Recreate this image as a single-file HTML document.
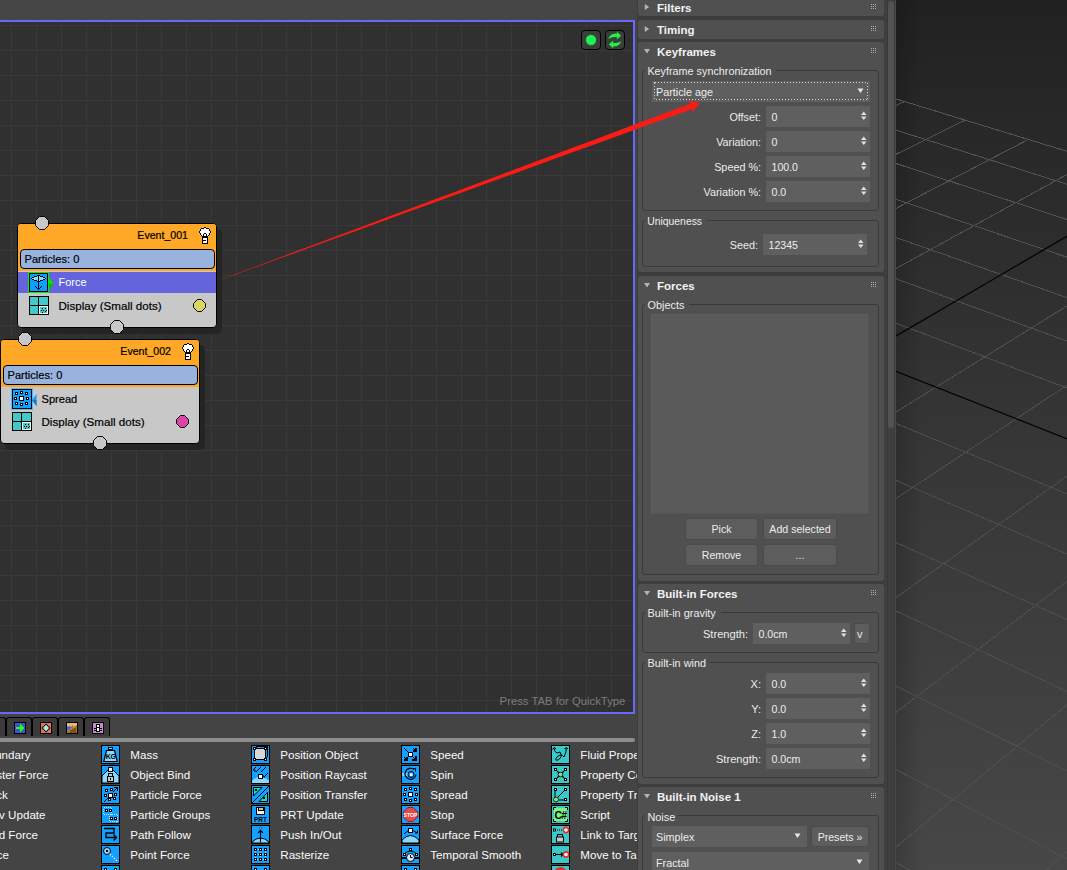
<!DOCTYPE html><html><head><meta charset="utf-8"><style>
html,body{margin:0;padding:0}
body{width:1067px;height:870px;overflow:hidden;position:relative;background:#3c3c3c;font-family:"Liberation Sans",sans-serif}
.b{position:absolute;box-sizing:border-box}
.t{position:absolute;white-space:nowrap}
svg.b{display:block}
</style></head><body>
<div class="b" style="left:0px;top:0px;width:636px;height:20px;background:#464646"></div>
<div class="b" style="left:0px;top:20px;width:635px;height:694px;background:#6868fc"></div>
<div class="b" style="left:0px;top:22px;width:633px;height:690px;background:#303030"></div>
<svg class="b" style="left:0px;top:22px;" width="633" height="690" viewBox="0 0 633 690"><rect x="11" y="0" width="1" height="690" fill="#393939"/><rect x="36" y="0" width="1" height="690" fill="#393939"/><rect x="61" y="0" width="1" height="690" fill="#393939"/><rect x="86" y="0" width="1" height="690" fill="#393939"/><rect x="111" y="0" width="1" height="690" fill="#393939"/><rect x="136" y="0" width="1" height="690" fill="#393939"/><rect x="161" y="0" width="1" height="690" fill="#393939"/><rect x="186" y="0" width="1" height="690" fill="#393939"/><rect x="211" y="0" width="1" height="690" fill="#393939"/><rect x="236" y="0" width="1" height="690" fill="#393939"/><rect x="261" y="0" width="1" height="690" fill="#393939"/><rect x="286" y="0" width="1" height="690" fill="#393939"/><rect x="311" y="0" width="1" height="690" fill="#393939"/><rect x="336" y="0" width="1" height="690" fill="#393939"/><rect x="361" y="0" width="1" height="690" fill="#393939"/><rect x="386" y="0" width="1" height="690" fill="#393939"/><rect x="411" y="0" width="1" height="690" fill="#393939"/><rect x="436" y="0" width="1" height="690" fill="#393939"/><rect x="461" y="0" width="1" height="690" fill="#393939"/><rect x="486" y="0" width="1" height="690" fill="#393939"/><rect x="511" y="0" width="1" height="690" fill="#393939"/><rect x="536" y="0" width="1" height="690" fill="#393939"/><rect x="561" y="0" width="1" height="690" fill="#393939"/><rect x="586" y="0" width="1" height="690" fill="#393939"/><rect x="611" y="0" width="1" height="690" fill="#393939"/><rect x="0" y="3" width="633" height="1" fill="#393939"/><rect x="0" y="28" width="633" height="1" fill="#393939"/><rect x="0" y="53" width="633" height="1" fill="#393939"/><rect x="0" y="78" width="633" height="1" fill="#393939"/><rect x="0" y="103" width="633" height="1" fill="#393939"/><rect x="0" y="128" width="633" height="1" fill="#393939"/><rect x="0" y="153" width="633" height="1" fill="#393939"/><rect x="0" y="178" width="633" height="1" fill="#393939"/><rect x="0" y="203" width="633" height="1" fill="#393939"/><rect x="0" y="228" width="633" height="1" fill="#393939"/><rect x="0" y="253" width="633" height="1" fill="#393939"/><rect x="0" y="278" width="633" height="1" fill="#393939"/><rect x="0" y="303" width="633" height="1" fill="#393939"/><rect x="0" y="328" width="633" height="1" fill="#393939"/><rect x="0" y="353" width="633" height="1" fill="#393939"/><rect x="0" y="378" width="633" height="1" fill="#393939"/><rect x="0" y="403" width="633" height="1" fill="#393939"/><rect x="0" y="428" width="633" height="1" fill="#393939"/><rect x="0" y="453" width="633" height="1" fill="#393939"/><rect x="0" y="478" width="633" height="1" fill="#393939"/><rect x="0" y="503" width="633" height="1" fill="#393939"/><rect x="0" y="528" width="633" height="1" fill="#393939"/><rect x="0" y="553" width="633" height="1" fill="#393939"/><rect x="0" y="578" width="633" height="1" fill="#393939"/><rect x="0" y="603" width="633" height="1" fill="#393939"/><rect x="0" y="628" width="633" height="1" fill="#393939"/><rect x="0" y="653" width="633" height="1" fill="#393939"/><rect x="0" y="678" width="633" height="1" fill="#393939"/></svg>
<div class="b" style="left:581px;top:30px;width:20px;height:20px;background:#3c3c3c;border:1px solid #000;border-radius:4px"></div>
<svg class="b" style="left:581px;top:30px;" width="20" height="20" viewBox="0 0 20 20"><circle cx="10" cy="10" r="5.5" fill="#22ee55" stroke="#0a4a1a" stroke-width="0.6"/></svg>
<div class="b" style="left:605px;top:30px;width:20px;height:20px;background:#3c3c3c;border:1px solid #000;border-radius:4px"></div>
<svg class="b" style="left:605px;top:30px;" width="20" height="20" viewBox="0 0 20 20"><path d="M3.2 9 Q5.5 3.2 12 3.6 L11.8 1.5 L16.2 5.8 L11.8 9.6 L12 7.2 Q7.5 6.6 3.2 9Z" fill="#22ee44"/><path d="M16.3 11.2 Q14 16.8 8 16.4 L8.2 18.5 L3.8 14.2 L8.2 10.4 L8 12.8 Q12.5 13.4 16.3 11.2Z" fill="#22ee44"/></svg>
<div class="t" style="left:499.60px;top:695.73px;font-size:11.3px;line-height:11.3px;color:#7c7c7c;font-weight:normal;">Press TAB for QuickType</div>
<div class="b" style="left:22px;top:229px;width:200px;height:105px;background:#242424;border-radius:5px"></div>
<div class="b" style="left:17px;top:223px;width:200px;height:105px;background:#c8c8c8;border:1px solid #000;border-radius:4px;overflow:hidden"></div>
<div class="b" style="left:18px;top:224px;width:198px;height:47px;background:#ffa828;border-radius:3px 3px 0 0"></div>
<div class="b" style="left:20px;top:249px;width:195px;height:20px;background:#98b4de;border:1px solid #000;border-radius:4px"></div>
<div class="t" style="left:24.50px;top:253.60px;font-size:11.1px;line-height:11.1px;color:#000;font-weight:normal;-webkit-text-stroke:0.2px #000">Particles: 0</div>
<div class="t" style="right:879.00px;top:230.03px;font-size:10.6px;line-height:10.6px;color:#000;font-weight:normal;text-align:right;-webkit-text-stroke:0.2px #000">Event_001</div>
<svg class="b" style="left:199px;top:227px;shape-rendering:crispEdges" width="12" height="17" viewBox="0 0 12 17"><rect x="5" y="0" width="1" height="1" fill="#000"/><rect x="6" y="0" width="1" height="1" fill="#000"/><rect x="2" y="1" width="1" height="1" fill="#000"/><rect x="3" y="1" width="1" height="1" fill="#000"/><rect x="4" y="1" width="1" height="1" fill="#000"/><rect x="5" y="1" width="1" height="1" fill="#fff"/><rect x="6" y="1" width="1" height="1" fill="#fff"/><rect x="7" y="1" width="1" height="1" fill="#000"/><rect x="8" y="1" width="1" height="1" fill="#000"/><rect x="9" y="1" width="1" height="1" fill="#000"/><rect x="1" y="2" width="1" height="1" fill="#000"/><rect x="2" y="2" width="1" height="1" fill="#fff"/><rect x="3" y="2" width="1" height="1" fill="#fff"/><rect x="4" y="2" width="1" height="1" fill="#fff"/><rect x="5" y="2" width="1" height="1" fill="#fff"/><rect x="6" y="2" width="1" height="1" fill="#fff"/><rect x="7" y="2" width="1" height="1" fill="#fff"/><rect x="8" y="2" width="1" height="1" fill="#fff"/><rect x="9" y="2" width="1" height="1" fill="#fff"/><rect x="10" y="2" width="1" height="1" fill="#000"/><rect x="1" y="3" width="1" height="1" fill="#000"/><rect x="2" y="3" width="1" height="1" fill="#fff"/><rect x="3" y="3" width="1" height="1" fill="#fff"/><rect x="4" y="3" width="1" height="1" fill="#fff"/><rect x="5" y="3" width="1" height="1" fill="#fff"/><rect x="6" y="3" width="1" height="1" fill="#fff"/><rect x="7" y="3" width="1" height="1" fill="#fff"/><rect x="8" y="3" width="1" height="1" fill="#fff"/><rect x="9" y="3" width="1" height="1" fill="#fff"/><rect x="10" y="3" width="1" height="1" fill="#000"/><rect x="0" y="4" width="1" height="1" fill="#000"/><rect x="1" y="4" width="1" height="1" fill="#fff"/><rect x="2" y="4" width="1" height="1" fill="#fff"/><rect x="3" y="4" width="1" height="1" fill="#fff"/><rect x="4" y="4" width="1" height="1" fill="#fff"/><rect x="5" y="4" width="1" height="1" fill="#fff"/><rect x="6" y="4" width="1" height="1" fill="#fff"/><rect x="7" y="4" width="1" height="1" fill="#fff"/><rect x="8" y="4" width="1" height="1" fill="#fff"/><rect x="9" y="4" width="1" height="1" fill="#fff"/><rect x="10" y="4" width="1" height="1" fill="#fff"/><rect x="11" y="4" width="1" height="1" fill="#000"/><rect x="0" y="5" width="1" height="1" fill="#000"/><rect x="1" y="5" width="1" height="1" fill="#fff"/><rect x="2" y="5" width="1" height="1" fill="#fff"/><rect x="3" y="5" width="1" height="1" fill="#fff"/><rect x="4" y="5" width="1" height="1" fill="#fff"/><rect x="5" y="5" width="1" height="1" fill="#fff"/><rect x="6" y="5" width="1" height="1" fill="#fff"/><rect x="7" y="5" width="1" height="1" fill="#fff"/><rect x="8" y="5" width="1" height="1" fill="#fff"/><rect x="9" y="5" width="1" height="1" fill="#fff"/><rect x="10" y="5" width="1" height="1" fill="#fff"/><rect x="11" y="5" width="1" height="1" fill="#000"/><rect x="1" y="6" width="1" height="1" fill="#000"/><rect x="2" y="6" width="1" height="1" fill="#fff"/><rect x="3" y="6" width="1" height="1" fill="#fff"/><rect x="4" y="6" width="1" height="1" fill="#fff"/><rect x="5" y="6" width="1" height="1" fill="#000"/><rect x="6" y="6" width="1" height="1" fill="#000"/><rect x="7" y="6" width="1" height="1" fill="#fff"/><rect x="8" y="6" width="1" height="1" fill="#fff"/><rect x="9" y="6" width="1" height="1" fill="#fff"/><rect x="10" y="6" width="1" height="1" fill="#000"/><rect x="1" y="7" width="1" height="1" fill="#000"/><rect x="2" y="7" width="1" height="1" fill="#fff"/><rect x="3" y="7" width="1" height="1" fill="#fff"/><rect x="4" y="7" width="1" height="1" fill="#000"/><rect x="5" y="7" width="1" height="1" fill="#fff"/><rect x="6" y="7" width="1" height="1" fill="#fff"/><rect x="7" y="7" width="1" height="1" fill="#000"/><rect x="8" y="7" width="1" height="1" fill="#fff"/><rect x="9" y="7" width="1" height="1" fill="#fff"/><rect x="10" y="7" width="1" height="1" fill="#000"/><rect x="2" y="8" width="1" height="1" fill="#000"/><rect x="3" y="8" width="1" height="1" fill="#fff"/><rect x="4" y="8" width="1" height="1" fill="#000"/><rect x="5" y="8" width="1" height="1" fill="#fff"/><rect x="6" y="8" width="1" height="1" fill="#fff"/><rect x="7" y="8" width="1" height="1" fill="#000"/><rect x="8" y="8" width="1" height="1" fill="#fff"/><rect x="9" y="8" width="1" height="1" fill="#000"/><rect x="3" y="9" width="1" height="1" fill="#000"/><rect x="4" y="9" width="1" height="1" fill="#000"/><rect x="5" y="9" width="1" height="1" fill="#000"/><rect x="6" y="9" width="1" height="1" fill="#000"/><rect x="7" y="9" width="1" height="1" fill="#000"/><rect x="8" y="9" width="1" height="1" fill="#000"/><rect x="3" y="10" width="1" height="1" fill="#000"/><rect x="4" y="10" width="1" height="1" fill="#000"/><rect x="5" y="10" width="1" height="1" fill="#000"/><rect x="6" y="10" width="1" height="1" fill="#000"/><rect x="7" y="10" width="1" height="1" fill="#000"/><rect x="8" y="10" width="1" height="1" fill="#000"/><rect x="3" y="11" width="1" height="1" fill="#000"/><rect x="4" y="11" width="1" height="1" fill="#fff"/><rect x="5" y="11" width="1" height="1" fill="#fff"/><rect x="6" y="11" width="1" height="1" fill="#fff"/><rect x="7" y="11" width="1" height="1" fill="#fff"/><rect x="8" y="11" width="1" height="1" fill="#000"/><rect x="3" y="12" width="1" height="1" fill="#000"/><rect x="4" y="12" width="1" height="1" fill="#fff"/><rect x="5" y="12" width="1" height="1" fill="#fff"/><rect x="6" y="12" width="1" height="1" fill="#fff"/><rect x="7" y="12" width="1" height="1" fill="#fff"/><rect x="8" y="12" width="1" height="1" fill="#000"/><rect x="3" y="13" width="1" height="1" fill="#000"/><rect x="4" y="13" width="1" height="1" fill="#000"/><rect x="5" y="13" width="1" height="1" fill="#000"/><rect x="6" y="13" width="1" height="1" fill="#000"/><rect x="7" y="13" width="1" height="1" fill="#fff"/><rect x="8" y="13" width="1" height="1" fill="#000"/><rect x="3" y="14" width="1" height="1" fill="#000"/><rect x="4" y="14" width="1" height="1" fill="#fff"/><rect x="5" y="14" width="1" height="1" fill="#fff"/><rect x="6" y="14" width="1" height="1" fill="#fff"/><rect x="7" y="14" width="1" height="1" fill="#fff"/><rect x="8" y="14" width="1" height="1" fill="#000"/><rect x="3" y="15" width="1" height="1" fill="#000"/><rect x="4" y="15" width="1" height="1" fill="#fff"/><rect x="5" y="15" width="1" height="1" fill="#fff"/><rect x="6" y="15" width="1" height="1" fill="#fff"/><rect x="7" y="15" width="1" height="1" fill="#fff"/><rect x="8" y="15" width="1" height="1" fill="#000"/><rect x="3" y="16" width="1" height="1" fill="#000"/><rect x="4" y="16" width="1" height="1" fill="#000"/><rect x="5" y="16" width="1" height="1" fill="#000"/><rect x="6" y="16" width="1" height="1" fill="#000"/><rect x="7" y="16" width="1" height="1" fill="#000"/><rect x="8" y="16" width="1" height="1" fill="#000"/></svg>
<div class="b" style="left:18px;top:272px;width:198px;height:21px;background:#6464dd"></div>
<svg class="b" style="left:28px;top:272px;shape-rendering:crispEdges" width="21" height="21" viewBox="0 0 21 21"><rect x="0" y="0" width="21" height="21" fill="#00ee00"/><rect x="1" y="1" width="19" height="19" fill="#000"/><rect x="2" y="2" width="17" height="17" fill="#0aa0ff"/><rect x="9" y="3" width="3" height="1" fill="#000"/><rect x="6" y="4" width="3" height="1" fill="#000"/><rect x="9" y="4" width="3" height="1" fill="#8adcff"/><rect x="12" y="4" width="3" height="1" fill="#000"/><rect x="4" y="5" width="2" height="1" fill="#000"/><rect x="6" y="5" width="9" height="1" fill="#8adcff"/><rect x="15" y="5" width="2" height="1" fill="#000"/><rect x="3" y="6" width="1" height="1" fill="#000"/><rect x="4" y="6" width="13" height="1" fill="#8adcff"/><rect x="17" y="6" width="1" height="1" fill="#000"/><rect x="4" y="7" width="2" height="1" fill="#000"/><rect x="6" y="7" width="9" height="1" fill="#8adcff"/><rect x="15" y="7" width="2" height="1" fill="#000"/><rect x="6" y="8" width="3" height="1" fill="#000"/><rect x="9" y="8" width="3" height="1" fill="#8adcff"/><rect x="12" y="8" width="3" height="1" fill="#000"/><rect x="9" y="9" width="3" height="1" fill="#000"/><rect x="10" y="4" width="1" height="14" fill="#000"/><rect x="7" y="14" width="1" height="1" fill="#000"/><rect x="13" y="14" width="1" height="1" fill="#000"/><rect x="8" y="15" width="1" height="1" fill="#000"/><rect x="12" y="15" width="1" height="1" fill="#000"/><rect x="9" y="16" width="1" height="1" fill="#000"/><rect x="11" y="16" width="1" height="1" fill="#000"/><rect x="10" y="17" width="1" height="1" fill="#000"/></svg>
<svg class="b" style="left:49px;top:278px;" width="5" height="11" viewBox="0 0 5 11"><path d="M0 0 L4.5 5.5 L0 11Z" fill="#00ee00"/><path d="M0 5.5 L4.5 5.5 L0 11Z" fill="#00bb00"/></svg>
<div class="t" style="left:58.60px;top:277.47px;font-size:10.9px;line-height:10.9px;color:#fff;font-weight:normal;">Force</div>
<svg class="b" style="left:29px;top:296px;shape-rendering:crispEdges" width="20" height="19" viewBox="0 0 20 19"><rect x="0" y="0" width="20" height="19" fill="#000"/><rect x="1" y="1" width="8" height="8" fill="#44c8c8"/><rect x="10" y="1" width="9" height="8" fill="#44c8c8"/><rect x="1" y="10" width="8" height="8" fill="#44c8c8"/><rect x="10" y="10" width="9" height="8" fill="#fff"/><rect x="11" y="11" width="7" height="6" fill="#44c8c8"/><rect x="13" y="12" width="1" height="1" fill="#000"/><rect x="16" y="12" width="1" height="1" fill="#000"/><rect x="12" y="14" width="1" height="1" fill="#000"/><rect x="14" y="14" width="1" height="1" fill="#000"/><rect x="17" y="14" width="1" height="1" fill="#000"/><rect x="13" y="16" width="1" height="1" fill="#000"/><rect x="16" y="15" width="1" height="1" fill="#000"/></svg>
<div class="t" style="left:58.50px;top:299.68px;font-size:11.6px;line-height:11.6px;color:#000;font-weight:normal;-webkit-text-stroke:0.2px #000">Display (Small dots)</div>
<svg class="b" style="left:193px;top:299px;" width="14" height="14" viewBox="0 0 14 14"><polygon points="4.5,0.5 8.5,0.5 12.5,4.5 12.5,8.5 8.5,12.5 4.5,12.5 0.5,8.5 0.5,4.5" fill="#d8d860" stroke="#000" stroke-width="1"/></svg>
<svg class="b" style="left:35px;top:216px;" width="15" height="15" viewBox="0 0 15 15"><polygon points="4.5,0.5 9.5,0.5 13.5,4.5 13.5,9.5 9.5,13.5 4.5,13.5 0.5,9.5 0.5,4.5" fill="#c8c8c8" stroke="#000" stroke-width="1"/></svg>
<svg class="b" style="left:110px;top:320px;" width="15" height="15" viewBox="0 0 15 15"><polygon points="4.5,0.5 9.5,0.5 13.5,4.5 13.5,9.5 9.5,13.5 4.5,13.5 0.5,9.5 0.5,4.5" fill="#c8c8c8" stroke="#000" stroke-width="1"/></svg>
<div class="b" style="left:5px;top:345px;width:200px;height:105px;background:#242424;border-radius:5px"></div>
<div class="b" style="left:0px;top:339px;width:200px;height:105px;background:#c8c8c8;border:1px solid #000;border-radius:4px;overflow:hidden"></div>
<div class="b" style="left:1px;top:340px;width:198px;height:47px;background:#ffa828;border-radius:3px 3px 0 0"></div>
<div class="b" style="left:3px;top:365px;width:195px;height:20px;background:#98b4de;border:1px solid #000;border-radius:4px"></div>
<div class="t" style="left:7.50px;top:369.60px;font-size:11.1px;line-height:11.1px;color:#000;font-weight:normal;-webkit-text-stroke:0.2px #000">Particles: 0</div>
<div class="t" style="right:896.00px;top:346.03px;font-size:10.6px;line-height:10.6px;color:#000;font-weight:normal;text-align:right;-webkit-text-stroke:0.2px #000">Event_002</div>
<svg class="b" style="left:182px;top:343px;shape-rendering:crispEdges" width="12" height="17" viewBox="0 0 12 17"><rect x="5" y="0" width="1" height="1" fill="#000"/><rect x="6" y="0" width="1" height="1" fill="#000"/><rect x="2" y="1" width="1" height="1" fill="#000"/><rect x="3" y="1" width="1" height="1" fill="#000"/><rect x="4" y="1" width="1" height="1" fill="#000"/><rect x="5" y="1" width="1" height="1" fill="#fff"/><rect x="6" y="1" width="1" height="1" fill="#fff"/><rect x="7" y="1" width="1" height="1" fill="#000"/><rect x="8" y="1" width="1" height="1" fill="#000"/><rect x="9" y="1" width="1" height="1" fill="#000"/><rect x="1" y="2" width="1" height="1" fill="#000"/><rect x="2" y="2" width="1" height="1" fill="#fff"/><rect x="3" y="2" width="1" height="1" fill="#fff"/><rect x="4" y="2" width="1" height="1" fill="#fff"/><rect x="5" y="2" width="1" height="1" fill="#fff"/><rect x="6" y="2" width="1" height="1" fill="#fff"/><rect x="7" y="2" width="1" height="1" fill="#fff"/><rect x="8" y="2" width="1" height="1" fill="#fff"/><rect x="9" y="2" width="1" height="1" fill="#fff"/><rect x="10" y="2" width="1" height="1" fill="#000"/><rect x="1" y="3" width="1" height="1" fill="#000"/><rect x="2" y="3" width="1" height="1" fill="#fff"/><rect x="3" y="3" width="1" height="1" fill="#fff"/><rect x="4" y="3" width="1" height="1" fill="#fff"/><rect x="5" y="3" width="1" height="1" fill="#fff"/><rect x="6" y="3" width="1" height="1" fill="#fff"/><rect x="7" y="3" width="1" height="1" fill="#fff"/><rect x="8" y="3" width="1" height="1" fill="#fff"/><rect x="9" y="3" width="1" height="1" fill="#fff"/><rect x="10" y="3" width="1" height="1" fill="#000"/><rect x="0" y="4" width="1" height="1" fill="#000"/><rect x="1" y="4" width="1" height="1" fill="#fff"/><rect x="2" y="4" width="1" height="1" fill="#fff"/><rect x="3" y="4" width="1" height="1" fill="#fff"/><rect x="4" y="4" width="1" height="1" fill="#fff"/><rect x="5" y="4" width="1" height="1" fill="#fff"/><rect x="6" y="4" width="1" height="1" fill="#fff"/><rect x="7" y="4" width="1" height="1" fill="#fff"/><rect x="8" y="4" width="1" height="1" fill="#fff"/><rect x="9" y="4" width="1" height="1" fill="#fff"/><rect x="10" y="4" width="1" height="1" fill="#fff"/><rect x="11" y="4" width="1" height="1" fill="#000"/><rect x="0" y="5" width="1" height="1" fill="#000"/><rect x="1" y="5" width="1" height="1" fill="#fff"/><rect x="2" y="5" width="1" height="1" fill="#fff"/><rect x="3" y="5" width="1" height="1" fill="#fff"/><rect x="4" y="5" width="1" height="1" fill="#fff"/><rect x="5" y="5" width="1" height="1" fill="#fff"/><rect x="6" y="5" width="1" height="1" fill="#fff"/><rect x="7" y="5" width="1" height="1" fill="#fff"/><rect x="8" y="5" width="1" height="1" fill="#fff"/><rect x="9" y="5" width="1" height="1" fill="#fff"/><rect x="10" y="5" width="1" height="1" fill="#fff"/><rect x="11" y="5" width="1" height="1" fill="#000"/><rect x="1" y="6" width="1" height="1" fill="#000"/><rect x="2" y="6" width="1" height="1" fill="#fff"/><rect x="3" y="6" width="1" height="1" fill="#fff"/><rect x="4" y="6" width="1" height="1" fill="#fff"/><rect x="5" y="6" width="1" height="1" fill="#000"/><rect x="6" y="6" width="1" height="1" fill="#000"/><rect x="7" y="6" width="1" height="1" fill="#fff"/><rect x="8" y="6" width="1" height="1" fill="#fff"/><rect x="9" y="6" width="1" height="1" fill="#fff"/><rect x="10" y="6" width="1" height="1" fill="#000"/><rect x="1" y="7" width="1" height="1" fill="#000"/><rect x="2" y="7" width="1" height="1" fill="#fff"/><rect x="3" y="7" width="1" height="1" fill="#fff"/><rect x="4" y="7" width="1" height="1" fill="#000"/><rect x="5" y="7" width="1" height="1" fill="#fff"/><rect x="6" y="7" width="1" height="1" fill="#fff"/><rect x="7" y="7" width="1" height="1" fill="#000"/><rect x="8" y="7" width="1" height="1" fill="#fff"/><rect x="9" y="7" width="1" height="1" fill="#fff"/><rect x="10" y="7" width="1" height="1" fill="#000"/><rect x="2" y="8" width="1" height="1" fill="#000"/><rect x="3" y="8" width="1" height="1" fill="#fff"/><rect x="4" y="8" width="1" height="1" fill="#000"/><rect x="5" y="8" width="1" height="1" fill="#fff"/><rect x="6" y="8" width="1" height="1" fill="#fff"/><rect x="7" y="8" width="1" height="1" fill="#000"/><rect x="8" y="8" width="1" height="1" fill="#fff"/><rect x="9" y="8" width="1" height="1" fill="#000"/><rect x="3" y="9" width="1" height="1" fill="#000"/><rect x="4" y="9" width="1" height="1" fill="#000"/><rect x="5" y="9" width="1" height="1" fill="#000"/><rect x="6" y="9" width="1" height="1" fill="#000"/><rect x="7" y="9" width="1" height="1" fill="#000"/><rect x="8" y="9" width="1" height="1" fill="#000"/><rect x="3" y="10" width="1" height="1" fill="#000"/><rect x="4" y="10" width="1" height="1" fill="#000"/><rect x="5" y="10" width="1" height="1" fill="#000"/><rect x="6" y="10" width="1" height="1" fill="#000"/><rect x="7" y="10" width="1" height="1" fill="#000"/><rect x="8" y="10" width="1" height="1" fill="#000"/><rect x="3" y="11" width="1" height="1" fill="#000"/><rect x="4" y="11" width="1" height="1" fill="#fff"/><rect x="5" y="11" width="1" height="1" fill="#fff"/><rect x="6" y="11" width="1" height="1" fill="#fff"/><rect x="7" y="11" width="1" height="1" fill="#fff"/><rect x="8" y="11" width="1" height="1" fill="#000"/><rect x="3" y="12" width="1" height="1" fill="#000"/><rect x="4" y="12" width="1" height="1" fill="#fff"/><rect x="5" y="12" width="1" height="1" fill="#fff"/><rect x="6" y="12" width="1" height="1" fill="#fff"/><rect x="7" y="12" width="1" height="1" fill="#fff"/><rect x="8" y="12" width="1" height="1" fill="#000"/><rect x="3" y="13" width="1" height="1" fill="#000"/><rect x="4" y="13" width="1" height="1" fill="#000"/><rect x="5" y="13" width="1" height="1" fill="#000"/><rect x="6" y="13" width="1" height="1" fill="#000"/><rect x="7" y="13" width="1" height="1" fill="#fff"/><rect x="8" y="13" width="1" height="1" fill="#000"/><rect x="3" y="14" width="1" height="1" fill="#000"/><rect x="4" y="14" width="1" height="1" fill="#fff"/><rect x="5" y="14" width="1" height="1" fill="#fff"/><rect x="6" y="14" width="1" height="1" fill="#fff"/><rect x="7" y="14" width="1" height="1" fill="#fff"/><rect x="8" y="14" width="1" height="1" fill="#000"/><rect x="3" y="15" width="1" height="1" fill="#000"/><rect x="4" y="15" width="1" height="1" fill="#fff"/><rect x="5" y="15" width="1" height="1" fill="#fff"/><rect x="6" y="15" width="1" height="1" fill="#fff"/><rect x="7" y="15" width="1" height="1" fill="#fff"/><rect x="8" y="15" width="1" height="1" fill="#000"/><rect x="3" y="16" width="1" height="1" fill="#000"/><rect x="4" y="16" width="1" height="1" fill="#000"/><rect x="5" y="16" width="1" height="1" fill="#000"/><rect x="6" y="16" width="1" height="1" fill="#000"/><rect x="7" y="16" width="1" height="1" fill="#000"/><rect x="8" y="16" width="1" height="1" fill="#000"/></svg>
<svg class="b" style="left:11px;top:388px;shape-rendering:crispEdges" width="22" height="22" viewBox="0 0 22 22"><rect x="0" y="0" width="22" height="22" fill="#55b8ff"/><rect x="1" y="1" width="20" height="20" fill="#000"/><rect x="2" y="2" width="18" height="18" fill="#14a0ff"/><rect x="4.0" y="4.0" width="3" height="3" fill="#000"/><rect x="5.0" y="5.0" width="1" height="1" fill="#fff"/><rect x="9.0" y="3.0" width="3" height="3" fill="#000"/><rect x="10.0" y="4.0" width="1" height="1" fill="#fff"/><rect x="14.0" y="4.0" width="3" height="3" fill="#000"/><rect x="15.0" y="5.0" width="1" height="1" fill="#fff"/><rect x="3.0" y="9.0" width="3" height="3" fill="#000"/><rect x="4.0" y="10.0" width="1" height="1" fill="#fff"/><rect x="15.0" y="9.0" width="3" height="3" fill="#000"/><rect x="16.0" y="10.0" width="1" height="1" fill="#fff"/><rect x="4.0" y="14.0" width="3" height="3" fill="#000"/><rect x="5.0" y="15.0" width="1" height="1" fill="#fff"/><rect x="9.0" y="15.0" width="3" height="3" fill="#000"/><rect x="10.0" y="16.0" width="1" height="1" fill="#fff"/><rect x="14.0" y="14.0" width="3" height="3" fill="#000"/><rect x="15.0" y="15.0" width="1" height="1" fill="#fff"/><rect x="8" y="8" width="5" height="5" fill="#000"/><rect x="9" y="9" width="3" height="3" fill="#fff"/></svg>
<svg class="b" style="left:32px;top:394px;" width="5" height="12" viewBox="0 0 5 12"><path d="M4.5 0 L0 6 L4.5 12Z" fill="#2299ee"/><path d="M4.5 6 L0 6 L4.5 12Z" fill="#1a77bb"/></svg>
<div class="t" style="left:41.50px;top:394.10px;font-size:11.1px;line-height:11.1px;color:#000;font-weight:normal;-webkit-text-stroke:0.2px #000">Spread</div>
<svg class="b" style="left:12px;top:412px;shape-rendering:crispEdges" width="20" height="19" viewBox="0 0 20 19"><rect x="0" y="0" width="20" height="19" fill="#000"/><rect x="1" y="1" width="8" height="8" fill="#44c8c8"/><rect x="10" y="1" width="9" height="8" fill="#44c8c8"/><rect x="1" y="10" width="8" height="8" fill="#44c8c8"/><rect x="10" y="10" width="9" height="8" fill="#fff"/><rect x="11" y="11" width="7" height="6" fill="#44c8c8"/><rect x="13" y="12" width="1" height="1" fill="#000"/><rect x="16" y="12" width="1" height="1" fill="#000"/><rect x="12" y="14" width="1" height="1" fill="#000"/><rect x="14" y="14" width="1" height="1" fill="#000"/><rect x="17" y="14" width="1" height="1" fill="#000"/><rect x="13" y="16" width="1" height="1" fill="#000"/><rect x="16" y="15" width="1" height="1" fill="#000"/></svg>
<div class="t" style="left:41.50px;top:415.68px;font-size:11.6px;line-height:11.6px;color:#000;font-weight:normal;-webkit-text-stroke:0.2px #000">Display (Small dots)</div>
<svg class="b" style="left:176px;top:415px;" width="14" height="14" viewBox="0 0 14 14"><polygon points="4.5,0.5 8.5,0.5 12.5,4.5 12.5,8.5 8.5,12.5 4.5,12.5 0.5,8.5 0.5,4.5" fill="#dd44aa" stroke="#000" stroke-width="1"/></svg>
<svg class="b" style="left:18px;top:332px;" width="15" height="15" viewBox="0 0 15 15"><polygon points="4.5,0.5 9.5,0.5 13.5,4.5 13.5,9.5 9.5,13.5 4.5,13.5 0.5,9.5 0.5,4.5" fill="#c8c8c8" stroke="#000" stroke-width="1"/></svg>
<svg class="b" style="left:93px;top:436px;" width="15" height="15" viewBox="0 0 15 15"><polygon points="4.5,0.5 9.5,0.5 13.5,4.5 13.5,9.5 9.5,13.5 4.5,13.5 0.5,9.5 0.5,4.5" fill="#c8c8c8" stroke="#000" stroke-width="1"/></svg>
<div class="b" style="left:635px;top:0px;width:2px;height:870px;background:#454545"></div>
<div class="b" style="left:637px;top:0px;width:259px;height:870px;background:#3d3d3d"></div>
<div class="b" style="left:638px;top:-2px;width:246px;height:18px;background:#505050;border-radius:3px"></div>
<svg class="b" style="left:644px;top:3px;" width="6" height="8" viewBox="0 0 6 8"><path d="M0.8 1 V7 L5.2 4Z" fill="#b4b4b4"/></svg>
<div class="t" style="left:657.00px;top:3.07px;font-size:11.5px;line-height:11.5px;color:#f2f2f2;font-weight:bold;">Filters</div>
<svg class="b" style="left:871px;top:4px;shape-rendering:crispEdges" width="6" height="6" viewBox="0 0 6 6"><rect x="0" y="0" width="1" height="1" fill="#b0b0b0"/><rect x="0" y="2" width="1" height="1" fill="#b0b0b0"/><rect x="0" y="4" width="1" height="1" fill="#b0b0b0"/><rect x="2" y="0" width="1" height="1" fill="#b0b0b0"/><rect x="2" y="2" width="1" height="1" fill="#b0b0b0"/><rect x="2" y="4" width="1" height="1" fill="#b0b0b0"/><rect x="4" y="0" width="1" height="1" fill="#b0b0b0"/><rect x="4" y="2" width="1" height="1" fill="#b0b0b0"/><rect x="4" y="4" width="1" height="1" fill="#b0b0b0"/></svg>
<div class="b" style="left:638px;top:20px;width:246px;height:19px;background:#505050;border-radius:3px"></div>
<svg class="b" style="left:644px;top:25px;" width="6" height="8" viewBox="0 0 6 8"><path d="M0.8 1 V7 L5.2 4Z" fill="#b4b4b4"/></svg>
<div class="t" style="left:657.00px;top:25.07px;font-size:11.5px;line-height:11.5px;color:#f2f2f2;font-weight:bold;">Timing</div>
<svg class="b" style="left:871px;top:26px;shape-rendering:crispEdges" width="6" height="6" viewBox="0 0 6 6"><rect x="0" y="0" width="1" height="1" fill="#b0b0b0"/><rect x="0" y="2" width="1" height="1" fill="#b0b0b0"/><rect x="0" y="4" width="1" height="1" fill="#b0b0b0"/><rect x="2" y="0" width="1" height="1" fill="#b0b0b0"/><rect x="2" y="2" width="1" height="1" fill="#b0b0b0"/><rect x="2" y="4" width="1" height="1" fill="#b0b0b0"/><rect x="4" y="0" width="1" height="1" fill="#b0b0b0"/><rect x="4" y="2" width="1" height="1" fill="#b0b0b0"/><rect x="4" y="4" width="1" height="1" fill="#b0b0b0"/></svg>
<div class="b" style="left:638px;top:42px;width:246px;height:230px;background:#505050;border-radius:3px"></div>
<svg class="b" style="left:643px;top:48px;" width="8" height="6" viewBox="0 0 8 6"><path d="M1 1 H7 L4 5.5Z" fill="#b4b4b4"/></svg>
<div class="t" style="left:657.00px;top:47.07px;font-size:11.5px;line-height:11.5px;color:#f2f2f2;font-weight:bold;">Keyframes</div>
<svg class="b" style="left:871px;top:48px;shape-rendering:crispEdges" width="6" height="6" viewBox="0 0 6 6"><rect x="0" y="0" width="1" height="1" fill="#b0b0b0"/><rect x="0" y="2" width="1" height="1" fill="#b0b0b0"/><rect x="0" y="4" width="1" height="1" fill="#b0b0b0"/><rect x="2" y="0" width="1" height="1" fill="#b0b0b0"/><rect x="2" y="2" width="1" height="1" fill="#b0b0b0"/><rect x="2" y="4" width="1" height="1" fill="#b0b0b0"/><rect x="4" y="0" width="1" height="1" fill="#b0b0b0"/><rect x="4" y="2" width="1" height="1" fill="#b0b0b0"/><rect x="4" y="4" width="1" height="1" fill="#b0b0b0"/></svg>
<div class="b" style="left:642px;top:70px;width:237px;height:141px;border:1px solid #3a3a3a;border-radius:3px"></div>
<div class="b" style="left:645px;top:69px;width:131px;height:3px;background:#505050"></div>
<div class="t" style="left:647.40px;top:65.76px;font-size:10.8px;line-height:10.8px;color:#ececec;font-weight:normal;">Keyframe synchronization</div>
<div class="b" style="left:652px;top:81px;width:218px;height:21px;background:#5f5f5f"></div>
<svg class="b" style="left:652px;top:81px;shape-rendering:crispEdges" width="218" height="21" viewBox="0 0 218 21"><rect x="2.5" y="1.5" width="213" height="17" fill="none" stroke="#d4d4d4" stroke-width="1" stroke-dasharray="1 2"/></svg>
<div class="t" style="left:656.00px;top:87.26px;font-size:10.8px;line-height:10.8px;color:#ececec;font-weight:normal;">Particle age</div>
<svg class="b" style="left:857px;top:88px;" width="7" height="6" viewBox="0 0 7 6"><path d="M0.5 0.5 H6.5 L3.5 5Z" fill="#e8e8e8"/></svg>
<div class="t" style="right:306.00px;top:112.06px;font-size:10.8px;line-height:10.8px;color:#ececec;font-weight:normal;text-align:right;">Offset:</div>
<div class="b" style="left:766px;top:106px;width:104px;height:21px;background:#5f5f5f"></div>
<div class="t" style="left:771.50px;top:112.23px;font-size:10.6px;line-height:10.6px;color:#ececec;font-weight:normal;">0</div>
<svg class="b" style="left:861px;top:111px;" width="6" height="10" viewBox="0 0 6 10"><path d="M0 4 L2.75 0.5 L5.5 4Z M0 5.5 L5.5 5.5 L2.75 9Z" fill="#e0e0e0"/></svg>
<div class="t" style="right:306.00px;top:137.06px;font-size:10.8px;line-height:10.8px;color:#ececec;font-weight:normal;text-align:right;">Variation:</div>
<div class="b" style="left:766px;top:131px;width:104px;height:21px;background:#5f5f5f"></div>
<div class="t" style="left:771.50px;top:137.23px;font-size:10.6px;line-height:10.6px;color:#ececec;font-weight:normal;">0</div>
<svg class="b" style="left:861px;top:136px;" width="6" height="10" viewBox="0 0 6 10"><path d="M0 4 L2.75 0.5 L5.5 4Z M0 5.5 L5.5 5.5 L2.75 9Z" fill="#e0e0e0"/></svg>
<div class="t" style="right:306.00px;top:162.06px;font-size:10.8px;line-height:10.8px;color:#ececec;font-weight:normal;text-align:right;">Speed %:</div>
<div class="b" style="left:766px;top:156px;width:104px;height:21px;background:#5f5f5f"></div>
<div class="t" style="left:771.50px;top:162.23px;font-size:10.6px;line-height:10.6px;color:#ececec;font-weight:normal;">100.0</div>
<svg class="b" style="left:861px;top:161px;" width="6" height="10" viewBox="0 0 6 10"><path d="M0 4 L2.75 0.5 L5.5 4Z M0 5.5 L5.5 5.5 L2.75 9Z" fill="#e0e0e0"/></svg>
<div class="t" style="right:306.00px;top:187.06px;font-size:10.8px;line-height:10.8px;color:#ececec;font-weight:normal;text-align:right;">Variation %:</div>
<div class="b" style="left:766px;top:181px;width:104px;height:21px;background:#5f5f5f"></div>
<div class="t" style="left:771.50px;top:187.23px;font-size:10.6px;line-height:10.6px;color:#ececec;font-weight:normal;">0.0</div>
<svg class="b" style="left:861px;top:186px;" width="6" height="10" viewBox="0 0 6 10"><path d="M0 4 L2.75 0.5 L5.5 4Z M0 5.5 L5.5 5.5 L2.75 9Z" fill="#e0e0e0"/></svg>
<div class="b" style="left:642px;top:220px;width:237px;height:47px;border:1px solid #3a3a3a;border-radius:3px"></div>
<div class="b" style="left:645px;top:219px;width:62px;height:3px;background:#505050"></div>
<div class="t" style="left:647.20px;top:216.80px;font-size:10.4px;line-height:10.4px;color:#ececec;font-weight:normal;">Uniqueness</div>
<div class="t" style="right:309.00px;top:240.06px;font-size:10.8px;line-height:10.8px;color:#ececec;font-weight:normal;text-align:right;">Seed:</div>
<div class="b" style="left:763px;top:234px;width:104px;height:21px;background:#5f5f5f"></div>
<div class="t" style="left:768.50px;top:240.23px;font-size:10.6px;line-height:10.6px;color:#ececec;font-weight:normal;">12345</div>
<svg class="b" style="left:858px;top:239px;" width="6" height="10" viewBox="0 0 6 10"><path d="M0 4 L2.75 0.5 L5.5 4Z M0 5.5 L5.5 5.5 L2.75 9Z" fill="#e0e0e0"/></svg>
<div class="b" style="left:638px;top:276px;width:246px;height:305px;background:#505050;border-radius:3px"></div>
<svg class="b" style="left:643px;top:282px;" width="8" height="6" viewBox="0 0 8 6"><path d="M1 1 H7 L4 5.5Z" fill="#b4b4b4"/></svg>
<div class="t" style="left:657.00px;top:281.07px;font-size:11.5px;line-height:11.5px;color:#f2f2f2;font-weight:bold;">Forces</div>
<svg class="b" style="left:871px;top:282px;shape-rendering:crispEdges" width="6" height="6" viewBox="0 0 6 6"><rect x="0" y="0" width="1" height="1" fill="#b0b0b0"/><rect x="0" y="2" width="1" height="1" fill="#b0b0b0"/><rect x="0" y="4" width="1" height="1" fill="#b0b0b0"/><rect x="2" y="0" width="1" height="1" fill="#b0b0b0"/><rect x="2" y="2" width="1" height="1" fill="#b0b0b0"/><rect x="2" y="4" width="1" height="1" fill="#b0b0b0"/><rect x="4" y="0" width="1" height="1" fill="#b0b0b0"/><rect x="4" y="2" width="1" height="1" fill="#b0b0b0"/><rect x="4" y="4" width="1" height="1" fill="#b0b0b0"/></svg>
<div class="b" style="left:642px;top:304px;width:237px;height:271px;border:1px solid #3a3a3a;border-radius:3px"></div>
<div class="b" style="left:645px;top:303px;width:44px;height:3px;background:#505050"></div>
<div class="t" style="left:647.60px;top:300.22px;font-size:10.85px;line-height:10.85px;color:#ececec;font-weight:normal;">Objects</div>
<div class="b" style="left:651px;top:314px;width:218px;height:200px;background:#5a5a5a;border:1px solid #5f5f5f;border-right-color:#555;border-bottom-color:#555"></div>
<div class="b" style="left:685px;top:518px;width:73px;height:22px;background:#5d5d5d;border:1px solid #4b4b4b;border-radius:3px"></div>
<div class="t" style="left:571.50px;width:300px;text-align:center;top:524.13px;font-size:10.6px;line-height:10.6px;color:#ececec;font-weight:normal;">Pick</div>
<div class="b" style="left:763px;top:518px;width:74px;height:22px;background:#5d5d5d;border:1px solid #4b4b4b;border-radius:3px"></div>
<div class="t" style="left:650.00px;width:300px;text-align:center;top:524.13px;font-size:10.6px;line-height:10.6px;color:#ececec;font-weight:normal;">Add selected</div>
<div class="b" style="left:685px;top:544px;width:73px;height:22px;background:#5d5d5d;border:1px solid #4b4b4b;border-radius:3px"></div>
<div class="t" style="left:571.50px;width:300px;text-align:center;top:550.13px;font-size:10.6px;line-height:10.6px;color:#ececec;font-weight:normal;">Remove</div>
<div class="b" style="left:763px;top:544px;width:74px;height:22px;background:#5d5d5d;border:1px solid #4b4b4b;border-radius:3px"></div>
<div class="t" style="left:650.00px;width:300px;text-align:center;top:550.13px;font-size:10.6px;line-height:10.6px;color:#ececec;font-weight:normal;">...</div>
<div class="b" style="left:638px;top:584px;width:246px;height:200px;background:#505050;border-radius:3px"></div>
<svg class="b" style="left:643px;top:590px;" width="8" height="6" viewBox="0 0 8 6"><path d="M1 1 H7 L4 5.5Z" fill="#b4b4b4"/></svg>
<div class="t" style="left:657.00px;top:589.07px;font-size:11.5px;line-height:11.5px;color:#f2f2f2;font-weight:bold;">Built-in Forces</div>
<svg class="b" style="left:871px;top:590px;shape-rendering:crispEdges" width="6" height="6" viewBox="0 0 6 6"><rect x="0" y="0" width="1" height="1" fill="#b0b0b0"/><rect x="0" y="2" width="1" height="1" fill="#b0b0b0"/><rect x="0" y="4" width="1" height="1" fill="#b0b0b0"/><rect x="2" y="0" width="1" height="1" fill="#b0b0b0"/><rect x="2" y="2" width="1" height="1" fill="#b0b0b0"/><rect x="2" y="4" width="1" height="1" fill="#b0b0b0"/><rect x="4" y="0" width="1" height="1" fill="#b0b0b0"/><rect x="4" y="2" width="1" height="1" fill="#b0b0b0"/><rect x="4" y="4" width="1" height="1" fill="#b0b0b0"/></svg>
<div class="b" style="left:642px;top:612px;width:237px;height:41px;border:1px solid #3a3a3a;border-radius:3px"></div>
<div class="b" style="left:645px;top:611px;width:76px;height:3px;background:#505050"></div>
<div class="t" style="left:647.40px;top:607.97px;font-size:10.9px;line-height:10.9px;color:#ececec;font-weight:normal;">Built-in gravity</div>
<div class="t" style="right:319.00px;top:628.80px;font-size:11.1px;line-height:11.1px;color:#ececec;font-weight:normal;text-align:right;">Strength:</div>
<div class="b" style="left:753px;top:623px;width:97px;height:21px;background:#5f5f5f"></div>
<div class="t" style="left:758.50px;top:629.23px;font-size:10.6px;line-height:10.6px;color:#ececec;font-weight:normal;">0.0cm</div>
<svg class="b" style="left:841px;top:628px;" width="6" height="10" viewBox="0 0 6 10"><path d="M0 4 L2.75 0.5 L5.5 4Z M0 5.5 L5.5 5.5 L2.75 9Z" fill="#e0e0e0"/></svg>
<div class="b" style="left:854px;top:623px;width:16px;height:21px;background:#5d5d5d;border:1px solid #4b4b4b;border-radius:3px"></div>
<div class="t" style="left:712.00px;width:300px;text-align:center;top:629.13px;font-size:10.6px;line-height:10.6px;color:#ececec;font-weight:normal;"></div>
<div class="t" style="left:857.00px;top:629.09px;font-size:11px;line-height:11px;color:#ececec;font-weight:normal;">v</div>
<div class="b" style="left:642px;top:662px;width:237px;height:116px;border:1px solid #3a3a3a;border-radius:3px"></div>
<div class="b" style="left:645px;top:661px;width:65px;height:3px;background:#505050"></div>
<div class="t" style="left:647.40px;top:657.97px;font-size:10.9px;line-height:10.9px;color:#ececec;font-weight:normal;">Built-in wind</div>
<div class="t" style="right:306.00px;top:678.80px;font-size:11.1px;line-height:11.1px;color:#ececec;font-weight:normal;text-align:right;">X:</div>
<div class="b" style="left:766px;top:673px;width:104px;height:21px;background:#5f5f5f"></div>
<div class="t" style="left:771.50px;top:679.23px;font-size:10.6px;line-height:10.6px;color:#ececec;font-weight:normal;">0.0</div>
<svg class="b" style="left:861px;top:678px;" width="6" height="10" viewBox="0 0 6 10"><path d="M0 4 L2.75 0.5 L5.5 4Z M0 5.5 L5.5 5.5 L2.75 9Z" fill="#e0e0e0"/></svg>
<div class="t" style="right:306.00px;top:703.80px;font-size:11.1px;line-height:11.1px;color:#ececec;font-weight:normal;text-align:right;">Y:</div>
<div class="b" style="left:766px;top:698px;width:104px;height:21px;background:#5f5f5f"></div>
<div class="t" style="left:771.50px;top:704.23px;font-size:10.6px;line-height:10.6px;color:#ececec;font-weight:normal;">0.0</div>
<svg class="b" style="left:861px;top:703px;" width="6" height="10" viewBox="0 0 6 10"><path d="M0 4 L2.75 0.5 L5.5 4Z M0 5.5 L5.5 5.5 L2.75 9Z" fill="#e0e0e0"/></svg>
<div class="t" style="right:306.00px;top:728.80px;font-size:11.1px;line-height:11.1px;color:#ececec;font-weight:normal;text-align:right;">Z:</div>
<div class="b" style="left:766px;top:723px;width:104px;height:21px;background:#5f5f5f"></div>
<div class="t" style="left:771.50px;top:729.23px;font-size:10.6px;line-height:10.6px;color:#ececec;font-weight:normal;">1.0</div>
<svg class="b" style="left:861px;top:728px;" width="6" height="10" viewBox="0 0 6 10"><path d="M0 4 L2.75 0.5 L5.5 4Z M0 5.5 L5.5 5.5 L2.75 9Z" fill="#e0e0e0"/></svg>
<div class="t" style="right:306.00px;top:753.80px;font-size:11.1px;line-height:11.1px;color:#ececec;font-weight:normal;text-align:right;">Strength:</div>
<div class="b" style="left:766px;top:748px;width:104px;height:21px;background:#5f5f5f"></div>
<div class="t" style="left:771.50px;top:754.23px;font-size:10.6px;line-height:10.6px;color:#ececec;font-weight:normal;">0.0cm</div>
<svg class="b" style="left:861px;top:753px;" width="6" height="10" viewBox="0 0 6 10"><path d="M0 4 L2.75 0.5 L5.5 4Z M0 5.5 L5.5 5.5 L2.75 9Z" fill="#e0e0e0"/></svg>
<div class="b" style="left:638px;top:787px;width:246px;height:100px;background:#505050;border-radius:3px"></div>
<svg class="b" style="left:643px;top:793px;" width="8" height="6" viewBox="0 0 8 6"><path d="M1 1 H7 L4 5.5Z" fill="#b4b4b4"/></svg>
<div class="t" style="left:657.00px;top:792.07px;font-size:11.5px;line-height:11.5px;color:#f2f2f2;font-weight:bold;">Built-in Noise 1</div>
<svg class="b" style="left:871px;top:793px;shape-rendering:crispEdges" width="6" height="6" viewBox="0 0 6 6"><rect x="0" y="0" width="1" height="1" fill="#b0b0b0"/><rect x="0" y="2" width="1" height="1" fill="#b0b0b0"/><rect x="0" y="4" width="1" height="1" fill="#b0b0b0"/><rect x="2" y="0" width="1" height="1" fill="#b0b0b0"/><rect x="2" y="2" width="1" height="1" fill="#b0b0b0"/><rect x="2" y="4" width="1" height="1" fill="#b0b0b0"/><rect x="4" y="0" width="1" height="1" fill="#b0b0b0"/><rect x="4" y="2" width="1" height="1" fill="#b0b0b0"/><rect x="4" y="4" width="1" height="1" fill="#b0b0b0"/></svg>
<div class="b" style="left:642px;top:815px;width:237px;height:86px;border:1px solid #3a3a3a;border-radius:3px"></div>
<div class="b" style="left:645px;top:814px;width:33px;height:3px;background:#505050"></div>
<div class="t" style="left:647.40px;top:811.87px;font-size:10.9px;line-height:10.9px;color:#ececec;font-weight:normal;">Noise</div>
<div class="b" style="left:652px;top:826px;width:155px;height:21px;background:#5f5f5f"></div>
<div class="t" style="left:656.00px;top:832.26px;font-size:10.8px;line-height:10.8px;color:#ececec;font-weight:normal;">Simplex</div>
<svg class="b" style="left:794px;top:833px;" width="7" height="6" viewBox="0 0 7 6"><path d="M0.5 0.5 H6.5 L3.5 5Z" fill="#e8e8e8"/></svg>
<div class="b" style="left:811px;top:826px;width:58px;height:21px;background:#5d5d5d;border:1px solid #4b4b4b;border-radius:3px"></div>
<div class="t" style="left:690.00px;width:300px;text-align:center;top:832.13px;font-size:10.6px;line-height:10.6px;color:#ececec;font-weight:normal;">Presets »</div>
<div class="b" style="left:652px;top:852px;width:217px;height:21px;background:#5f5f5f"></div>
<div class="t" style="left:656.00px;top:858.26px;font-size:10.8px;line-height:10.8px;color:#ececec;font-weight:normal;">Fractal</div>
<svg class="b" style="left:856px;top:859px;" width="7" height="6" viewBox="0 0 7 6"><path d="M0.5 0.5 H6.5 L3.5 5Z" fill="#e8e8e8"/></svg>
<div class="b" style="left:884px;top:0px;width:12px;height:870px;background:#3f3f3f"></div>
<div class="b" style="left:887px;top:0px;width:1px;height:870px;background:#383838"></div>
<div class="b" style="left:888px;top:1px;width:6px;height:427px;background:#525252;border-radius:3px"></div>
<div class="b" style="left:894px;top:0px;width:1px;height:870px;background:#393939"></div>
<div class="b" style="left:895px;top:0px;width:1px;height:870px;background:#4a4a4a"></div>
<div class="b" style="left:0;top:714px;width:637px;height:156px;overflow:hidden;background:#444">
<div class="b" style="left:-20px;top:3px;width:26px;height:19px;background:#3b3b3b;border:1px solid #000;border-bottom:none;border-radius:3px 3px 0 0"></div>
<div class="b" style="left:6px;top:3px;width:26px;height:19px;background:#3b3b3b;border:1px solid #000;border-bottom:none;border-radius:3px 3px 0 0"></div>
<div class="b" style="left:32px;top:3px;width:26px;height:19px;background:#3b3b3b;border:1px solid #000;border-bottom:none;border-radius:3px 3px 0 0"></div>
<div class="b" style="left:58px;top:3px;width:26px;height:19px;background:#3b3b3b;border:1px solid #000;border-bottom:none;border-radius:3px 3px 0 0"></div>
<div class="b" style="left:84px;top:3px;width:26px;height:19px;background:#3b3b3b;border:1px solid #000;border-bottom:none;border-radius:3px 3px 0 0"></div>
<div class="b" style="left:0;top:24px;width:635px;height:4px;background:#8c8c8c;border-radius:0 2px 2px 0"></div>
</div>
<svg class="b" style="left:14px;top:722px;shape-rendering:crispEdges" width="12" height="12" viewBox="0 0 12 12"><rect x="0" y="0" width="12" height="12" fill="#000"/><rect x="1" y="1" width="10" height="10" fill="#4455cc"/><path d="M2 5h4v-3l4 4-4 4v-3h-4z" fill="#22ff22"/></svg>
<svg class="b" style="left:40px;top:722px;" width="12" height="12" viewBox="0 0 12 12"><rect x="0" y="0" width="12" height="12" fill="#000"/><rect x="1" y="1" width="10" height="10" fill="#e87060"/><path d="M6 1.5 L10.5 6 L6 10.5 L1.5 6Z" fill="#000"/><path d="M6 2.8 L9.2 6 L6 9.2 L2.8 6Z" fill="#a8f0d8"/></svg>
<svg class="b" style="left:66px;top:722px;" width="12" height="12" viewBox="0 0 12 12"><rect x="0" y="0" width="12" height="12" fill="#000"/><rect x="1" y="1" width="10" height="10" fill="#f0b860"/><path d="M1 9 L11 3 V11 H1Z" fill="#b07818"/><path d="M1 5 L3 4 L5 5 L7 3 V5 L1 9Z" fill="#4466ee"/><path d="M5 11 V8 M7 11 V7 M9 11 V6" stroke="#000" stroke-width="0.6"/></svg>
<svg class="b" style="left:92px;top:722px;shape-rendering:crispEdges" width="12" height="12" viewBox="0 0 12 12"><rect x="0" y="0" width="12" height="12" fill="#000"/><rect x="1" y="1" width="10" height="10" fill="#cc88cc"/><rect x="4" y="2" width="4" height="8" fill="#000"/><rect x="5" y="3" width="2" height="2" fill="#fff"/><rect x="5" y="6" width="2" height="3" fill="#fff"/><path d="M2 6h2M8 6h2M2 8h2M8 8h2" stroke="#000"/></svg>
<div class="b" style="left:0;top:742px;width:637px;height:128px;overflow:hidden">
<div class="t" style="right:606.40px;top:6.78px;font-size:11.6px;line-height:11.6px;color:#fafafa;font-weight:normal;text-align:right;">undary</div>
<div class="t" style="right:588.50px;top:26.78px;font-size:11.6px;line-height:11.6px;color:#fafafa;font-weight:normal;text-align:right;">ster Force</div>
<div class="t" style="right:629.20px;top:46.78px;font-size:11.6px;line-height:11.6px;color:#fafafa;font-weight:normal;text-align:right;">ck</div>
<div class="t" style="right:591.50px;top:66.78px;font-size:11.6px;line-height:11.6px;color:#fafafa;font-weight:normal;text-align:right;">v Update</div>
<div class="t" style="right:599.00px;top:86.78px;font-size:11.6px;line-height:11.6px;color:#fafafa;font-weight:normal;text-align:right;">d Force</div>
<div class="t" style="right:628.00px;top:106.78px;font-size:11.6px;line-height:11.6px;color:#fafafa;font-weight:normal;text-align:right;">ce</div>
<svg class="b" style="left:101px;top:3px;" width="19" height="19" viewBox="0 0 19 19"><rect x="0" y="0" width="19" height="19" fill="#000"/><rect x="1" y="1" width="17" height="17" fill="#14a0ff"/><path d="M7 2h5v3h-5z" fill="#000"/><path d="M8 3h3v1h-3z" fill="#8ad8ff"/><path d="M5 5h9l3 12h-15z" fill="#000"/><path d="M6 6h7l2.5 10h-12z" fill="#8ad8ff"/><text x="9.6" y="14" font-size="7" font-weight="bold" text-anchor="middle" font-family="Liberation Sans" fill="#000" letter-spacing="-0.3">KG</text></svg>
<div class="t" style="left:130.30px;top:6.78px;font-size:11.6px;line-height:11.6px;color:#fafafa;font-weight:normal;">Mass</div>
<svg class="b" style="left:101px;top:23px;" width="19" height="19" viewBox="0 0 19 19"><rect x="0" y="0" width="19" height="19" fill="#000"/><rect x="1" y="1" width="17" height="17" fill="#14a0ff"/><path d="M1 11 L8 4 H11 L18 11 V18 H1Z" fill="#8ad8ff" stroke="#000" stroke-width="1"/><rect x="7.5" y="2.5" width="4" height="4" fill="#fff" stroke="#000"/><rect x="7.5" y="8.5" width="4" height="3" fill="none" stroke="#000"/><rect x="6.5" y="11.5" width="6" height="5" fill="#c8c8c8" stroke="#000"/><rect x="9" y="13" width="1" height="2" fill="#000"/></svg>
<div class="t" style="left:130.30px;top:26.78px;font-size:11.6px;line-height:11.6px;color:#fafafa;font-weight:normal;">Object Bind</div>
<svg class="b" style="left:101px;top:43px;shape-rendering:crispEdges" width="19" height="19" viewBox="0 0 19 19"><rect x="0" y="0" width="19" height="19" fill="#000"/><rect x="1" y="1" width="17" height="17" fill="#14a0ff"/><rect x="4.0" y="4.0" width="3" height="3" fill="#000"/><rect x="5.0" y="5.0" width="1" height="1" fill="#fff"/><rect x="9.0" y="3.0" width="3" height="3" fill="#000"/><rect x="10.0" y="4.0" width="1" height="1" fill="#fff"/><rect x="3.0" y="9.0" width="3" height="3" fill="#000"/><rect x="4.0" y="10.0" width="1" height="1" fill="#fff"/><rect x="13.0" y="8.0" width="3" height="3" fill="#000"/><rect x="14.0" y="9.0" width="1" height="1" fill="#fff"/><rect x="7.0" y="13.0" width="3" height="3" fill="#000"/><rect x="8.0" y="14.0" width="1" height="1" fill="#fff"/><rect x="12.0" y="12.0" width="3" height="3" fill="#000"/><rect x="13.0" y="13.0" width="1" height="1" fill="#fff"/><rect x="7" y="8" width="5" height="5" fill="#000"/><rect x="8" y="9" width="3" height="3" fill="#fff"/><path d="M2.5 17.5 L7 13 M12 7 L16.5 2.5 M13 2.5 H16.5 V6" stroke="#000" stroke-width="1.2" fill="none"/></svg>
<div class="t" style="left:130.30px;top:46.78px;font-size:11.6px;line-height:11.6px;color:#fafafa;font-weight:normal;">Particle Force</div>
<svg class="b" style="left:101px;top:63px;shape-rendering:crispEdges" width="19" height="19" viewBox="0 0 19 19"><rect x="0" y="0" width="19" height="19" fill="#000"/><rect x="1" y="1" width="17" height="17" fill="#14a0ff"/><rect x="2.5" y="2.5" width="8" height="7" fill="none" stroke="#bfe8ff" stroke-dasharray="1 1"/><rect x="8.5" y="9.5" width="8" height="7" fill="none" stroke="#bfe8ff" stroke-dasharray="1 1"/><rect x="4.0" y="4.0" width="3" height="3" fill="#000"/><rect x="5.0" y="5.0" width="1" height="1" fill="#fff"/><rect x="8.0" y="4.0" width="3" height="3" fill="#000"/><rect x="9.0" y="5.0" width="1" height="1" fill="#fff"/><rect x="9.0" y="12.0" width="3" height="3" fill="#000"/><rect x="10.0" y="13.0" width="1" height="1" fill="#fff"/><rect x="13.0" y="12.0" width="3" height="3" fill="#000"/><rect x="14.0" y="13.0" width="1" height="1" fill="#fff"/></svg>
<div class="t" style="left:130.30px;top:66.78px;font-size:11.6px;line-height:11.6px;color:#fafafa;font-weight:normal;">Particle Groups</div>
<svg class="b" style="left:101px;top:83px;" width="19" height="19" viewBox="0 0 19 19"><rect x="0" y="0" width="19" height="19" fill="#000"/><rect x="1" y="1" width="17" height="17" fill="#14a0ff"/><path d="M3 3.5 H13 V8 H5 V12.5 H15.5 M12.5 9.5 L15.5 12.5 L12.5 15.5" stroke="#000" stroke-width="1.4" fill="none"/></svg>
<div class="t" style="left:130.30px;top:86.78px;font-size:11.6px;line-height:11.6px;color:#fafafa;font-weight:normal;">Path Follow</div>
<svg class="b" style="left:101px;top:103px;" width="19" height="19" viewBox="0 0 19 19"><rect x="0" y="0" width="19" height="19" fill="#000"/><rect x="1" y="1" width="17" height="17" fill="#14a0ff"/><circle cx="6" cy="6" r="3.5" fill="#8ad8ff" stroke="#000"/><rect x="5" y="5" width="2" height="2" fill="#000"/><path d="M9 9 L16 16" stroke="#fff" stroke-width="1.3" stroke-dasharray="1.3 1.5"/></svg>
<div class="t" style="left:130.30px;top:106.78px;font-size:11.6px;line-height:11.6px;color:#fafafa;font-weight:normal;">Point Force</div>
<svg class="b" style="left:101px;top:123px;shape-rendering:crispEdges" width="19" height="19" viewBox="0 0 19 19"><rect x="0" y="0" width="19" height="19" fill="#000"/><rect x="1" y="1" width="17" height="17" fill="#14a0ff"/><rect x="3.0" y="3.0" width="3" height="3" fill="#000"/><rect x="4.0" y="4.0" width="1" height="1" fill="#fff"/><rect x="13.0" y="3.0" width="3" height="3" fill="#000"/><rect x="14.0" y="4.0" width="1" height="1" fill="#fff"/></svg>
<svg class="b" style="left:251px;top:3px;shape-rendering:crispEdges" width="19" height="19" viewBox="0 0 19 19"><rect x="0" y="0" width="19" height="19" fill="#000"/><rect x="1" y="1" width="17" height="17" fill="#14a0ff"/><rect x="3.5" y="3.5" width="11" height="11" fill="#d8d8d8" stroke="#000"/><path d="M3.5 3.5 L6 1.5 H16 V12 L14.5 14.5" fill="none" stroke="#000"/><rect x="2.0" y="2.0" width="3" height="3" fill="#000"/><rect x="3.0" y="3.0" width="1" height="1" fill="#fff"/><rect x="13.0" y="2.0" width="3" height="3" fill="#000"/><rect x="14.0" y="3.0" width="1" height="1" fill="#fff"/><rect x="2.0" y="13.0" width="3" height="3" fill="#000"/><rect x="3.0" y="14.0" width="1" height="1" fill="#fff"/><rect x="13.0" y="13.0" width="3" height="3" fill="#000"/><rect x="14.0" y="14.0" width="1" height="1" fill="#fff"/></svg>
<div class="t" style="left:280.30px;top:6.78px;font-size:11.6px;line-height:11.6px;color:#fafafa;font-weight:normal;">Position Object</div>
<svg class="b" style="left:251px;top:23px;" width="19" height="19" viewBox="0 0 19 19"><rect x="0" y="0" width="19" height="19" fill="#000"/><rect x="1" y="1" width="17" height="17" fill="#14a0ff"/><path d="M1 16 Q9.5 7 18 16 V18 H1Z" fill="#8ad8ff"/><path d="M5 2 L2 5 M10 2 L5 7 M15 2 L10 7 M17 8 L13 12 M3 4 V6 H5 M12 10 V12 H14" stroke="#000" stroke-width="1" fill="none"/><rect x="7.5" y="9.5" width="4" height="4" fill="#fff" stroke="#000"/></svg>
<div class="t" style="left:280.30px;top:26.78px;font-size:11.6px;line-height:11.6px;color:#fafafa;font-weight:normal;">Position Raycast</div>
<svg class="b" style="left:251px;top:43px;" width="19" height="19" viewBox="0 0 19 19"><rect x="0" y="0" width="19" height="19" fill="#000"/><rect x="1" y="1" width="17" height="17" fill="#14a0ff"/><path d="M2.5 2.5 H11 L2.5 11Z" fill="#20d8b8" stroke="#000"/><path d="M16.5 7.5 V16.5 H8Z" fill="#20d8b8" stroke="#000"/><rect x="4" y="4" width="2" height="2" fill="#000"/><rect x="12" y="12" width="2" height="2" fill="#000"/><path d="M1 18 L18 1" stroke="#000"/></svg>
<div class="t" style="left:280.30px;top:46.78px;font-size:11.6px;line-height:11.6px;color:#fafafa;font-weight:normal;">Position Transfer</div>
<svg class="b" style="left:251px;top:63px;shape-rendering:crispEdges" width="19" height="19" viewBox="0 0 19 19"><rect x="0" y="0" width="19" height="19" fill="#000"/><rect x="1" y="1" width="17" height="17" fill="#14a0ff"/><rect x="5.5" y="2.5" width="8" height="7" fill="#f0f0f0" stroke="#000"/><rect x="7" y="2.5" width="5" height="2.5" fill="#e8c060" stroke="#000"/><text x="9.5" y="17" font-size="6.5" font-weight="bold" text-anchor="middle" font-family="Liberation Sans" fill="#000">PRT</text></svg>
<div class="t" style="left:280.30px;top:66.78px;font-size:11.6px;line-height:11.6px;color:#fafafa;font-weight:normal;">PRT Update</div>
<svg class="b" style="left:251px;top:83px;" width="19" height="19" viewBox="0 0 19 19"><rect x="0" y="0" width="19" height="19" fill="#000"/><rect x="1" y="1" width="17" height="17" fill="#14a0ff"/><path d="M1 17 Q9.5 9 18 17 V18 H1Z" fill="#8ad8ff" stroke="#000"/><path d="M9.5 5 V17 M7 8 L9.5 5.5 L12 8" stroke="#000" stroke-width="1.1" fill="none"/><circle cx="9.5" cy="3" r="1" fill="#fff" stroke="#000" stroke-width="0.6"/></svg>
<div class="t" style="left:280.30px;top:86.78px;font-size:11.6px;line-height:11.6px;color:#fafafa;font-weight:normal;">Push In/Out</div>
<svg class="b" style="left:251px;top:103px;shape-rendering:crispEdges" width="19" height="19" viewBox="0 0 19 19"><rect x="0" y="0" width="19" height="19" fill="#000"/><rect x="1" y="1" width="17" height="17" fill="#14a0ff"/><path d="M4.5 4.5 H14.5 V14.5 H4.5Z M4.5 9.5 H14.5 M9.5 4.5 V14.5" stroke="#9fd8ff" fill="none" stroke-dasharray="1 1"/><rect x="3.0" y="3.0" width="3" height="3" fill="#000"/><rect x="4.0" y="4.0" width="1" height="1" fill="#fff"/><rect x="3.0" y="8.0" width="3" height="3" fill="#000"/><rect x="4.0" y="9.0" width="1" height="1" fill="#fff"/><rect x="3.0" y="13.0" width="3" height="3" fill="#000"/><rect x="4.0" y="14.0" width="1" height="1" fill="#fff"/><rect x="8.0" y="3.0" width="3" height="3" fill="#000"/><rect x="9.0" y="4.0" width="1" height="1" fill="#fff"/><rect x="8.0" y="8.0" width="3" height="3" fill="#000"/><rect x="9.0" y="9.0" width="1" height="1" fill="#fff"/><rect x="8.0" y="13.0" width="3" height="3" fill="#000"/><rect x="9.0" y="14.0" width="1" height="1" fill="#fff"/><rect x="13.0" y="3.0" width="3" height="3" fill="#000"/><rect x="14.0" y="4.0" width="1" height="1" fill="#fff"/><rect x="13.0" y="8.0" width="3" height="3" fill="#000"/><rect x="14.0" y="9.0" width="1" height="1" fill="#fff"/><rect x="13.0" y="13.0" width="3" height="3" fill="#000"/><rect x="14.0" y="14.0" width="1" height="1" fill="#fff"/></svg>
<div class="t" style="left:280.30px;top:106.78px;font-size:11.6px;line-height:11.6px;color:#fafafa;font-weight:normal;">Rasterize</div>
<svg class="b" style="left:251px;top:123px;shape-rendering:crispEdges" width="19" height="19" viewBox="0 0 19 19"><rect x="0" y="0" width="19" height="19" fill="#000"/><rect x="1" y="1" width="17" height="17" fill="#14a0ff"/><rect x="3.0" y="3.0" width="3" height="3" fill="#000"/><rect x="4.0" y="4.0" width="1" height="1" fill="#fff"/><rect x="13.0" y="3.0" width="3" height="3" fill="#000"/><rect x="14.0" y="4.0" width="1" height="1" fill="#fff"/></svg>
<svg class="b" style="left:401px;top:3px;shape-rendering:crispEdges" width="19" height="19" viewBox="0 0 19 19"><rect x="0" y="0" width="19" height="19" fill="#000"/><rect x="1" y="1" width="17" height="17" fill="#14a0ff"/><path d="M3 3 L15 15 M11 15 H15 V11 M12 3 L15 6 M15 3 V6 H12 M3 12 L6 15 M3 15 H6 V12" stroke="#000" stroke-width="1.3" fill="none"/><rect x="7" y="7" width="5" height="5" fill="#000"/><rect x="8" y="8" width="3" height="3" fill="#fff"/></svg>
<div class="t" style="left:430.30px;top:6.78px;font-size:11.6px;line-height:11.6px;color:#fafafa;font-weight:normal;">Speed</div>
<svg class="b" style="left:401px;top:23px;" width="19" height="19" viewBox="0 0 19 19"><rect x="0" y="0" width="19" height="19" fill="#000"/><rect x="1" y="1" width="17" height="17" fill="#14a0ff"/><rect x="1" y="8" width="6" height="3" fill="#7fd0ff"/><path d="M13 4.5 A5.5 5.5 0 1 0 15 9.5" stroke="#000" stroke-width="1.2" fill="none"/><path d="M11.5 3.5 H14.5 V6.5" stroke="#000" fill="none"/><circle cx="10" cy="9.5" r="3" fill="none" stroke="#000"/><rect x="9" y="8.5" width="2.5" height="2.5" fill="#fff"/></svg>
<div class="t" style="left:430.30px;top:26.78px;font-size:11.6px;line-height:11.6px;color:#fafafa;font-weight:normal;">Spin</div>
<svg class="b" style="left:401px;top:43px;shape-rendering:crispEdges" width="19" height="19" viewBox="0 0 19 19"><rect x="0" y="0" width="19" height="19" fill="#000"/><rect x="1" y="1" width="17" height="17" fill="#14a0ff"/><rect x="3.0" y="3.0" width="3" height="3" fill="#000"/><rect x="4.0" y="4.0" width="1" height="1" fill="#fff"/><rect x="8.0" y="2.0" width="3" height="3" fill="#000"/><rect x="9.0" y="3.0" width="1" height="1" fill="#fff"/><rect x="13.0" y="3.0" width="3" height="3" fill="#000"/><rect x="14.0" y="4.0" width="1" height="1" fill="#fff"/><rect x="2.0" y="8.0" width="3" height="3" fill="#000"/><rect x="3.0" y="9.0" width="1" height="1" fill="#fff"/><rect x="14.0" y="8.0" width="3" height="3" fill="#000"/><rect x="15.0" y="9.0" width="1" height="1" fill="#fff"/><rect x="3.0" y="13.0" width="3" height="3" fill="#000"/><rect x="4.0" y="14.0" width="1" height="1" fill="#fff"/><rect x="8.0" y="14.0" width="3" height="3" fill="#000"/><rect x="9.0" y="15.0" width="1" height="1" fill="#fff"/><rect x="13.0" y="13.0" width="3" height="3" fill="#000"/><rect x="14.0" y="14.0" width="1" height="1" fill="#fff"/><rect x="7" y="7" width="5" height="5" fill="#000"/><rect x="8" y="8" width="3" height="3" fill="#fff"/></svg>
<div class="t" style="left:430.30px;top:46.78px;font-size:11.6px;line-height:11.6px;color:#fafafa;font-weight:normal;">Spread</div>
<svg class="b" style="left:401px;top:63px;" width="19" height="19" viewBox="0 0 19 19"><rect x="0" y="0" width="19" height="19" fill="#000"/><rect x="1" y="1" width="17" height="17" fill="#14a0ff"/><path d="M7 2.5 H12 L16.5 7 V12 L12 16.5 H7 L2.5 12 V7Z" fill="#e84848" stroke="#8a1a1a" stroke-width="0.9"/><text x="9.5" y="11.8" font-size="5.2" font-weight="bold" text-anchor="middle" font-family="Liberation Sans" fill="#fff">STOP</text></svg>
<div class="t" style="left:430.30px;top:66.78px;font-size:11.6px;line-height:11.6px;color:#fafafa;font-weight:normal;">Stop</div>
<svg class="b" style="left:401px;top:83px;" width="19" height="19" viewBox="0 0 19 19"><rect x="0" y="0" width="19" height="19" fill="#000"/><rect x="1" y="1" width="17" height="17" fill="#14a0ff"/><path d="M1 18 V15 Q9.5 6 18 15 V18Z" fill="#8ad8ff" stroke="#000"/><path d="M3 9 Q9.5 2 16 8 M14 8 H16.5 V5.5" stroke="#000" fill="none"/><rect x="7.5" y="3.5" width="4" height="4" fill="#fff" stroke="#000"/></svg>
<div class="t" style="left:430.30px;top:86.78px;font-size:11.6px;line-height:11.6px;color:#fafafa;font-weight:normal;">Surface Force</div>
<svg class="b" style="left:401px;top:103px;" width="19" height="19" viewBox="0 0 19 19"><rect x="0" y="0" width="19" height="19" fill="#000"/><rect x="1" y="1" width="17" height="17" fill="#14a0ff"/><path d="M1 13 H18" stroke="#000" stroke-width="2"/><path d="M2 10 Q9.5 2 17 10" stroke="#000" fill="none"/><circle cx="9.5" cy="12.5" r="4" fill="#dde8ff" stroke="#000"/><path d="M9.5 10 V12.5 H11.5" stroke="#000" fill="none"/><rect x="8.0" y="3.0" width="3" height="3" fill="#000"/><rect x="9.0" y="4.0" width="1" height="1" fill="#fff"/><rect x="2.0" y="8.0" width="3" height="3" fill="#000"/><rect x="3.0" y="9.0" width="1" height="1" fill="#fff"/><rect x="14.0" y="8.0" width="3" height="3" fill="#000"/><rect x="15.0" y="9.0" width="1" height="1" fill="#fff"/></svg>
<div class="t" style="left:430.30px;top:106.78px;font-size:11.6px;line-height:11.6px;color:#fafafa;font-weight:normal;">Temporal Smooth</div>
<svg class="b" style="left:401px;top:123px;shape-rendering:crispEdges" width="19" height="19" viewBox="0 0 19 19"><rect x="0" y="0" width="19" height="19" fill="#000"/><rect x="1" y="1" width="17" height="17" fill="#14a0ff"/><rect x="3.0" y="3.0" width="3" height="3" fill="#000"/><rect x="4.0" y="4.0" width="1" height="1" fill="#fff"/><rect x="13.0" y="3.0" width="3" height="3" fill="#000"/><rect x="14.0" y="4.0" width="1" height="1" fill="#fff"/></svg>
<svg class="b" style="left:551px;top:3px;" width="19" height="19" viewBox="0 0 19 19"><rect x="0" y="0" width="19" height="19" fill="#000"/><rect x="1" y="1" width="17" height="17" fill="#3cc8c8"/><path d="M3 3 Q4 10 9 7 Q12 12 7 15 Q3 16 6 12 Q10 8 13 12 Q16 6 15 3 M1.5 4.5 L3 2.5 L5 4 M13.5 4 L15 2.5 L17 4" stroke="#000" stroke-width="1" fill="none"/></svg>
<div class="t" style="left:580.30px;top:6.78px;font-size:11.6px;line-height:11.6px;color:#fafafa;font-weight:normal;">Fluid Properties</div>
<svg class="b" style="left:551px;top:23px;" width="19" height="19" viewBox="0 0 19 19"><rect x="0" y="0" width="19" height="19" fill="#000"/><rect x="1" y="1" width="17" height="17" fill="#3cc8c8"/><rect x="3.0" y="3.0" width="3" height="3" fill="#000"/><rect x="4.0" y="4.0" width="1" height="1" fill="#fff"/><rect x="13.0" y="3.0" width="3" height="3" fill="#000"/><rect x="14.0" y="4.0" width="1" height="1" fill="#fff"/><rect x="3.0" y="13.0" width="3" height="3" fill="#000"/><rect x="4.0" y="14.0" width="1" height="1" fill="#fff"/><rect x="13.0" y="13.0" width="3" height="3" fill="#000"/><rect x="14.0" y="14.0" width="1" height="1" fill="#fff"/><path d="M6 6 L8 8 M13 6 L11 8 M6 13 L8 11 M13 13 L11 11" stroke="#000" stroke-width="1.2"/><circle cx="9.5" cy="9.5" r="2.3" fill="#80e080" stroke="#000" stroke-width="0.8"/></svg>
<div class="t" style="left:580.30px;top:26.78px;font-size:11.6px;line-height:11.6px;color:#fafafa;font-weight:normal;">Property Copy</div>
<svg class="b" style="left:551px;top:43px;" width="19" height="19" viewBox="0 0 19 19"><rect x="0" y="0" width="19" height="19" fill="#000"/><rect x="1" y="1" width="17" height="17" fill="#3cc8c8"/><rect x="3.0" y="3.0" width="3" height="3" fill="#000"/><rect x="4.0" y="4.0" width="1" height="1" fill="#fff"/><rect x="13.0" y="3.0" width="3" height="3" fill="#000"/><rect x="14.0" y="4.0" width="1" height="1" fill="#fff"/><rect x="13.0" y="13.0" width="3" height="3" fill="#000"/><rect x="14.0" y="14.0" width="1" height="1" fill="#fff"/><path d="M4 6 V12 M7 12 L13 6 M8 15 H13" stroke="#000" stroke-width="1"/><circle cx="5" cy="14.5" r="2.5" fill="#80e080" stroke="#000" stroke-width="0.8"/></svg>
<div class="t" style="left:580.30px;top:46.78px;font-size:11.6px;line-height:11.6px;color:#fafafa;font-weight:normal;">Property Transfer</div>
<svg class="b" style="left:551px;top:63px;" width="19" height="19" viewBox="0 0 19 19"><rect x="0" y="0" width="19" height="19" fill="#000"/><rect x="1" y="1" width="17" height="17" fill="#3cc8c8"/><rect x="3" y="3" width="13" height="13" fill="#80f080"/><path d="M2.5 5 V2.5 H5 M14 2.5 H16.5 V5 M2.5 14 V16.5 H5 M14 16.5 H16.5 V14" stroke="#000" fill="none"/><text x="9.5" y="14" font-size="10.5" font-weight="bold" text-anchor="middle" font-family="Liberation Sans" fill="#000" letter-spacing="-0.8">C#</text></svg>
<div class="t" style="left:580.30px;top:66.78px;font-size:11.6px;line-height:11.6px;color:#fafafa;font-weight:normal;">Script</div>
<svg class="b" style="left:551px;top:83px;" width="19" height="19" viewBox="0 0 19 19"><rect x="0" y="0" width="19" height="19" fill="#000"/><rect x="1" y="1" width="17" height="17" fill="#3cc8c8"/><rect x="2.0" y="3.5" width="3" height="3" fill="#000"/><rect x="3.0" y="4.5" width="1" height="1" fill="#fff"/><path d="M6 5 H12" stroke="#000" stroke-dasharray="1 1"/><circle cx="15" cy="5" r="2.6" fill="#fff" stroke="#e03030" stroke-width="1.6"/><rect x="6.5" y="9.5" width="5" height="3" fill="none" stroke="#000"/><rect x="5.5" y="12" width="7" height="5" fill="#c8c8c8" stroke="#000"/></svg>
<div class="t" style="left:580.30px;top:86.78px;font-size:11.6px;line-height:11.6px;color:#fafafa;font-weight:normal;">Link to Target</div>
<svg class="b" style="left:551px;top:103px;" width="19" height="19" viewBox="0 0 19 19"><rect x="0" y="0" width="19" height="19" fill="#000"/><rect x="1" y="1" width="17" height="17" fill="#3cc8c8"/><rect x="2.0" y="8.0" width="3" height="3" fill="#000"/><rect x="3.0" y="9.0" width="1" height="1" fill="#fff"/><path d="M5 9.5 H12 M10 7.5 L12 9.5 L10 11.5" stroke="#000" stroke-width="1.1" fill="none"/><circle cx="15" cy="9.5" r="2.6" fill="#fff" stroke="#e03030" stroke-width="1.6"/></svg>
<div class="t" style="left:580.30px;top:106.78px;font-size:11.6px;line-height:11.6px;color:#fafafa;font-weight:normal;">Move to Target</div>
<svg class="b" style="left:551px;top:123px;" width="19" height="19" viewBox="0 0 19 19"><rect x="0" y="0" width="19" height="19" fill="#000"/><rect x="1" y="1" width="17" height="17" fill="#3cc8c8"/><path d="M4 6 A5.5 4 0 0 1 15 6Z" fill="#e03030"/></svg>
</div>
<svg class="b" style="left:896px;top:0px;" width="171" height="870" viewBox="0 0 171 870"><defs><linearGradient id="vg" x1="0" y1="0" x2="0" y2="1"><stop offset="0" stop-color="#212121"/><stop offset="0.12" stop-color="#272727"/><stop offset="0.48" stop-color="#353535"/><stop offset="1" stop-color="#474747"/></linearGradient><linearGradient id="gl" gradientUnits="userSpaceOnUse" x1="0" y1="0" x2="0" y2="870"><stop offset="0" stop-color="#575757"/><stop offset="0.5" stop-color="#4c4c4c"/><stop offset="1" stop-color="#4f4f4f"/></linearGradient><linearGradient id="vl" x1="0" y1="0" x2="1" y2="0"><stop offset="0" stop-color="#000" stop-opacity="0.16"/><stop offset="1" stop-color="#000" stop-opacity="0"/></linearGradient></defs><rect x="0" y="0" width="171" height="870" fill="url(#vg)"/><rect x="0" y="0" width="28" height="870" fill="url(#vl)"/><g stroke="url(#gl)" stroke-width="1" shape-rendering="crispEdges"><line x1="-160.42" y1="49.77" x2="-911.10" y2="358.00"/><line x1="-160.42" y1="49.77" x2="839.37" y2="356.08"/><line x1="-106.21" y1="66.38" x2="-856.72" y2="388.12"/><line x1="-201.16" y1="66.49" x2="809.32" y2="386.31"/><line x1="-49.95" y1="83.61" x2="-799.56" y2="419.77"/><line x1="-243.43" y1="83.85" x2="777.74" y2="418.09"/><line x1="8.48" y1="101.51" x2="-739.38" y2="453.10"/><line x1="-287.32" y1="101.87" x2="744.49" y2="451.54"/><line x1="69.19" y1="120.12" x2="-675.96" y2="488.22"/><line x1="-332.93" y1="120.60" x2="709.45" y2="486.79"/><line x1="132.34" y1="139.46" x2="-609.01" y2="525.30"/><line x1="-380.36" y1="140.08" x2="672.46" y2="523.99"/><line x1="198.07" y1="159.60" x2="-538.24" y2="564.49"/><line x1="-429.72" y1="160.34" x2="633.37" y2="563.32"/><line x1="337.91" y1="202.45" x2="-383.83" y2="650.00"/><line x1="-534.74" y1="203.46" x2="548.09" y2="649.11"/><line x1="412.40" y1="225.27" x2="-299.39" y2="696.77"/><line x1="-590.66" y1="226.43" x2="501.46" y2="696.01"/><line x1="490.20" y1="249.10" x2="-209.50" y2="746.55"/><line x1="-649.06" y1="250.41" x2="451.82" y2="745.94"/><line x1="571.54" y1="274.02" x2="-113.62" y2="799.65"/><line x1="-710.12" y1="275.48" x2="398.89" y2="799.19"/><line x1="656.66" y1="300.10" x2="-11.13" y2="856.41"/><line x1="-774.00" y1="301.71" x2="342.32" y2="856.10"/><line x1="745.84" y1="327.43" x2="98.69" y2="917.22"/><line x1="-840.92" y1="329.19" x2="281.71" y2="917.07"/><line x1="839.37" y1="356.08" x2="216.63" y2="982.54"/><line x1="-911.10" y1="358.00" x2="216.63" y2="982.54"/></g><g stroke="#000" stroke-width="1.2"><line x1="266.53" y1="180.58" x2="-463.30" y2="605.99"/><line x1="-481.14" y1="181.46" x2="591.98" y2="604.95"/></g></svg>
<svg class="b" style="left:0px;top:0px;pointer-events:none" width="1067" height="870" viewBox="0 0 1067 870"><polygon points="216.47,281.23 236.21,273.81 255.95,266.41 275.69,259.00 295.43,251.60 315.18,244.20 334.92,236.80 354.66,229.40 374.41,222.00 394.15,214.60 413.89,207.21 433.64,199.81 453.38,192.42 473.13,185.02 492.87,177.63 512.62,170.23 532.36,162.84 552.11,155.44 571.85,148.05 591.60,140.66 611.34,133.26 631.09,125.87 650.83,118.48 670.58,111.08 690.32,103.69 687.06,100.63 700.30,103.00 691.44,113.09 692.26,108.95 672.44,116.14 652.62,123.33 632.80,130.51 612.98,137.70 593.16,144.89 573.34,152.08 553.52,159.27 533.70,166.46 513.87,173.64 494.05,180.83 474.23,188.02 454.41,195.20 434.59,202.39 414.77,209.57 394.94,216.76 375.12,223.94 355.30,231.13 335.48,238.31 315.65,245.49 295.83,252.67 276.01,259.85 256.18,267.03 236.35,274.20 216.53,281.37" fill="#f81c14"/></svg>
</body></html>
